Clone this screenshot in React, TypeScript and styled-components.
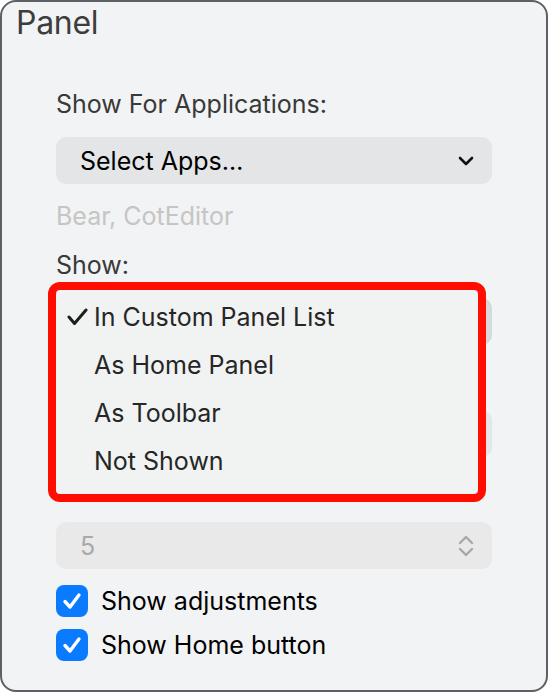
import React from 'react';
import styled, { createGlobalStyle } from 'styled-components';

const GlobalStyle = createGlobalStyle`
  html, body {
    margin: 0;
    padding: 0;
    background: #ffffff;
  }
  body {
    font-family: Inter, "Noto Sans", "Liberation Sans", sans-serif;
  }
`;

const Window = styled.div`
  position: relative;
  box-sizing: border-box;
  width: 548px;
  height: 692px;
  border: 2px solid #5d6166;
  border-radius: 16px;
  background: #f2f3f4;
  display: flex;
  flex-direction: column;
  overflow: hidden;
`;

const Title = styled.div`
  padding-left: 14px;
  height: 42px;
  line-height: 42px;
  font-size: 32px;
  color: #3d3d3d;
  letter-spacing: -0.3px;
`;

const Form = styled.div`
  margin-top: 44px;
  padding: 0 54px;
  display: flex;
  flex-direction: column;
  gap: 16px;
`;

const Label = styled.div<{ $muted?: boolean }>`
  height: 33px;
  line-height: 33px;
  font-size: 25px;
  color: ${(p) => (p.$muted ? '#c5c5c5' : '#393939')};
`;

const Select = styled.div<{ $tone?: 'normal' | 'pressed' | 'disabled' }>`
  box-sizing: border-box;
  height: 47px;
  border-radius: 10px;
  padding: 0 18px 0 24px;
  display: flex;
  align-items: center;
  justify-content: space-between;
  font-size: 25px;
  background: ${(p) =>
    p.$tone === 'pressed' ? '#d7d8d8' : p.$tone === 'disabled' ? '#e9e9e9' : '#e4e5e6'};
  color: ${(p) => (p.$tone === 'disabled' ? '#a9a9a9' : '#000000')};
`;

const Checks = styled.div`
  display: flex;
  flex-direction: column;
  gap: 12px;
`;

const CheckRow = styled.label`
  display: flex;
  align-items: center;
  gap: 13px;
  height: 32px;
  font-size: 25px;
  color: #000000;
`;

const Box = styled.span`
  width: 32px;
  height: 32px;
  border-radius: 8px;
  background: #0a7aff;
  display: flex;
  align-items: center;
  justify-content: center;
`;

const Menu = styled.div`
  position: absolute;
  left: 54px;
  top: 289px;
  width: 428px;
  height: 205px;
  box-sizing: border-box;
  padding-top: 2px;
  border-radius: 9px;
  background: #f1f2f2;
  box-shadow: 0 1px 0 1px #ffffff;
  display: flex;
  flex-direction: column;
`;

const MenuItem = styled.div`
  display: flex;
  align-items: center;
  height: 48px;
  font-size: 25px;
  color: #262626;
`;

const Tick = styled.span`
  width: 38px;
  padding-left: 11px;
  box-sizing: border-box;
  display: flex;
  align-items: center;
`;

const Highlight = styled.div`
  position: absolute;
  left: 46px;
  top: 280px;
  width: 438px;
  height: 220px;
  box-sizing: border-box;
  border: 8px solid #ff0d00;
  border-radius: 12px;
  pointer-events: none;
`;

const ChevronDown = () => (
  <svg width="16" height="10" viewBox="0 0 16 10">
    <polyline points="2,2 8,8 14,2" fill="none" stroke="#111" strokeWidth="2.6" strokeLinecap="round" strokeLinejoin="round" />
  </svg>
);

const UpDown = () => (
  <svg width="16" height="22" viewBox="0 0 16 22">
    <polyline points="2,8 8,2 14,8" fill="none" stroke="#a8a8a8" strokeWidth="2.4" strokeLinecap="round" strokeLinejoin="round" />
    <polyline points="2,14 8,20 14,14" fill="none" stroke="#a8a8a8" strokeWidth="2.4" strokeLinecap="round" strokeLinejoin="round" />
  </svg>
);

const WhiteCheck = () => (
  <svg width="20" height="18" viewBox="0 0 20 18">
    <polyline points="3,9.5 8,15 17,3" fill="none" stroke="#fff" strokeWidth="3.4" strokeLinecap="round" strokeLinejoin="round" />
  </svg>
);

const MenuCheck = () => (
  <svg width="21" height="18" viewBox="0 0 21 18">
    <polyline points="2,9 7.5,15.5 19,2" fill="none" stroke="#1e1e1e" strokeWidth="3" strokeLinecap="round" strokeLinejoin="round" />
  </svg>
);

const options = ['In Custom Panel List', 'As Home Panel', 'As Toolbar', 'Not Shown'];

export default function App() {
  return (
    <>
      <GlobalStyle />
      <Window>
        <Title>Panel</Title>
        <Form>
          <Label>Show For Applications:</Label>
          <Select>
            <span>Select Apps…</span>
            <ChevronDown />
          </Select>
          <Label $muted>Bear, CotEditor</Label>
          <Label>Show:</Label>
          {/* the popup below is covered by its open menu */}
          <Select $tone="pressed" />
          <Label />
          <Select />
          <Label />
          <Select $tone="disabled">
            <span>5</span>
            <UpDown />
          </Select>
          <Checks>
            <CheckRow>
              <Box><WhiteCheck /></Box>
              Show adjustments
            </CheckRow>
            <CheckRow>
              <Box><WhiteCheck /></Box>
              Show Home button
            </CheckRow>
          </Checks>
        </Form>
        <Menu>
          {options.map((o, i) => (
            <MenuItem key={o}>
              <Tick>{i === 0 && <MenuCheck />}</Tick>
              {o}
            </MenuItem>
          ))}
        </Menu>
        <Highlight />
      </Window>
    </>
  );
}
